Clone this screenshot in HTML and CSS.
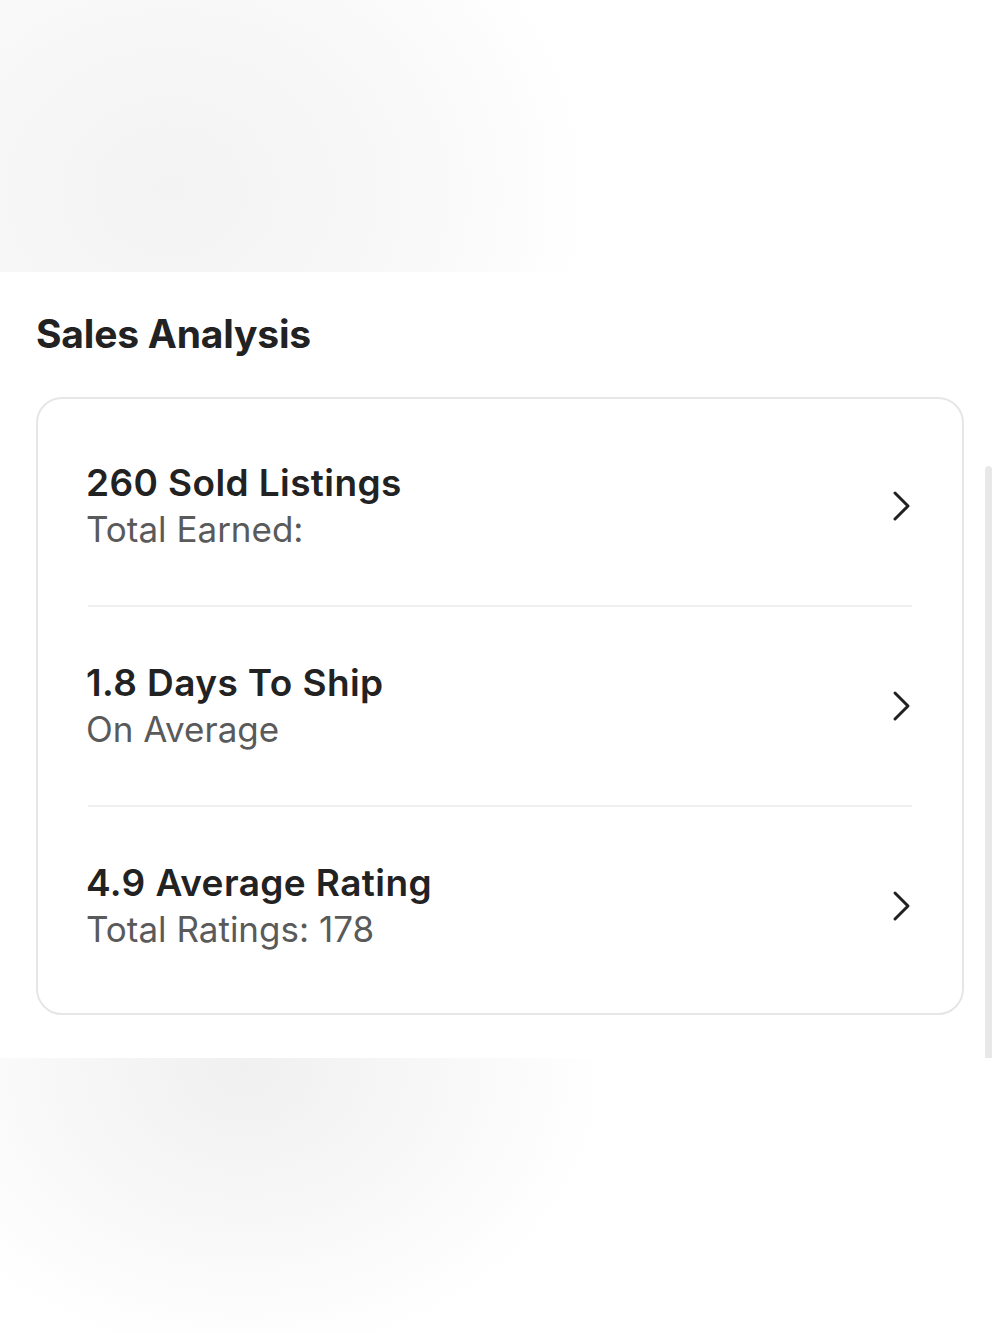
FILE: index.html
```html
<!DOCTYPE html>
<html lang="en">
<head>
<meta charset="utf-8">
<title>Sales Analysis</title>
<link rel="stylesheet" href="styles.css">
</head>
<body>
<div class="backdrop backdrop-top"></div>
<section class="panel">
  <h2 class="panel-title">Sales Analysis</h2>
  <div class="card">
    <a class="row" href="#">
      <div class="row-text">
        <div class="row-title">260 Sold Listings</div>
        <div class="row-sub">Total Earned:</div>
      </div>
      <svg class="chevron" viewBox="0 0 20 32" width="20" height="32"><path d="M3 3 L16 16 L3 29"/></svg>
    </a>
    <a class="row" href="#">
      <div class="row-text">
        <div class="row-title">1.8 Days To Ship</div>
        <div class="row-sub">On Average</div>
      </div>
      <svg class="chevron" viewBox="0 0 20 32" width="20" height="32"><path d="M3 3 L16 16 L3 29"/></svg>
    </a>
    <a class="row" href="#">
      <div class="row-text">
        <div class="row-title">4.9 Average Rating</div>
        <div class="row-sub">Total Ratings: 178</div>
      </div>
      <svg class="chevron" viewBox="0 0 20 32" width="20" height="32"><path d="M3 3 L16 16 L3 29"/></svg>
    </a>
  </div>
  <div class="scrollbar"></div>
</section>
<div class="backdrop backdrop-bottom"></div>
</body>
</html>
```
FILE: styles.css
```css
html, body {
  margin: 0;
  padding: 0;
  background: #ffffff;
}
body {
  font-family: Inter, "Liberation Sans", sans-serif;
  color: #222222;
  width: 1000px;
  height: 1333px;
  overflow: hidden;
}
.backdrop-top {
  height: 272px;
  background:
    radial-gradient(ellipse 420px 360px at 170px 190px, #f3f3f3 0%, #f6f6f6 35%, #fafafa 70%, #ffffff 100%);
}
.backdrop-bottom {
  height: 275px;
  background:
    radial-gradient(ellipse 360px 290px at 245px 10px, #f0f0f0 0%, #f5f5f5 35%, #fbfbfb 75%, #ffffff 100%);
}
.panel {
  position: relative;
  height: 786px;
  padding: 0 36px;
  box-sizing: border-box;
  background: #ffffff;
}
.panel-title {
  margin: 0;
  padding-top: 38px;
  font-size: 39px;
  line-height: 48px;
  font-weight: 700;
  color: #222222;
  letter-spacing: -0.2px;
}
.card {
  margin-top: 39px;
  border: 2px solid #e6e6e6;
  border-radius: 26px;
  padding: 8px 50px;
  display: flex;
  flex-direction: column;
}
.row {
  display: flex;
  align-items: center;
  justify-content: space-between;
  padding: 52px 0 52px;
  border-bottom: 2px solid #efefef;
  text-decoration: none;
  color: inherit;
}
.row:last-child {
  border-bottom: none;
}
.row-text {
  display: flex;
  flex-direction: column;
  margin-left: -2px;
}
.row-title {
  font-size: 37px;
  line-height: 47px;
  font-weight: 600;
  letter-spacing: 0.4px;
  color: #222222;
}
.row-sub {
  font-size: 35px;
  line-height: 47px;
  font-weight: 400;
  color: #5a5a5a;
}
.chevron {
  fill: none;
  stroke: #222222;
  stroke-width: 3px;
  stroke-linecap: round;
  stroke-linejoin: round;
  flex: none;
}
.scrollbar {
  position: absolute;
  right: 8px;
  top: 194px;
  bottom: 0;
  width: 7px;
  border-radius: 4px 4px 0 0;
  background: #e8e8e8;
}
```
